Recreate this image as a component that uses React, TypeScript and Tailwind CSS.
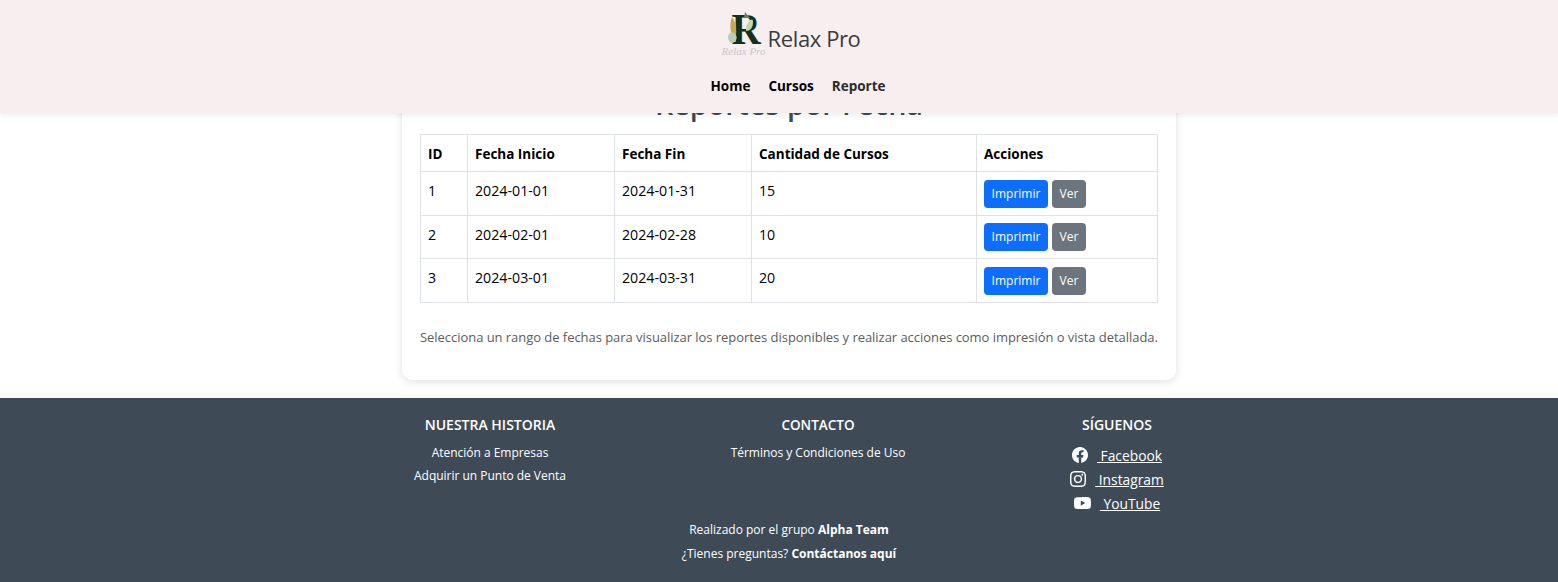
import { BsFacebook, BsInstagram, BsYoutube } from "react-icons/bs";

const rows = [
  ["1", "2024-01-01", "2024-01-31", "15"],
  ["2", "2024-02-01", "2024-02-28", "10"],
  ["3", "2024-03-01", "2024-03-31", "20"],
];

function Logo() {
  return (
    <div className="relative w-[45px] h-[58px] shrink-0">
      <span className="absolute left-[6px] top-[-1px] origin-right scale-x-[0.92] font-['Liberation_Serif',serif] font-bold text-[44px] leading-[44px] text-[#15301a]">R</span>
      <svg viewBox="0 0 45 58" className="absolute inset-0 w-full h-full">
        <path d="M9 8 C6 15 7 25 12 31 C14 24 14 14 9 8Z" fill="#c9a752" />
        <path d="M6 32 C3 26 8 21 12 25 C16 29 12 34 8 34Z" fill="#b7cfb5" />
        <path d="M23 19 C25 11 30 8 30 13 C30 19 27 22 23 22Z" fill="#c3d6ae" />
        <path d="M22 3 L27 9 L21 9Z" fill="#5f8a5f" />
      </svg>
      <span className="absolute left-[-1px] top-[36px] font-['Liberation_Serif',serif] italic text-[11px] leading-[12px] text-[#c8c8c6] whitespace-nowrap">Relax Pro</span>
    </div>
  );
}

export default function App() {
  return (
    <div className="relative h-[582px] overflow-hidden flex flex-col bg-white font-['Open_Sans',sans-serif] text-[14px] text-black">
      <header className="absolute top-0 inset-x-0 z-10 h-[113px] bg-[#f6eeef] shadow-[0_2px_6px_rgba(0,0,0,0.08)] flex flex-col items-center">
        <div className="flex items-center h-[76px] pl-[25px]">
          <Logo />
          <span className="text-[22px] text-[#3b3b3b] tracking-[-0.4px]">Relax Pro</span>
        </div>
        <nav className="flex gap-[18px] h-[20px] items-center pl-[38px] font-bold text-[13.5px]">
          <span>Home</span>
          <span>Cursos</span>
          <span className="text-[#2b2b2b]">Reporte</span>
        </nav>
      </header>

      <main className="flex-1 flex flex-col justify-end pb-[18px] min-h-0">
        <section className="ml-[402px] w-[774px] rounded-[10px] bg-white shadow-[0_2px_8px_rgba(0,0,0,0.12)] px-[18px] pb-[32px]">
          <h1 className="text-center text-[28.7px] leading-[36px] font-semibold text-[#3e4a56] mb-[12px]">Reportes por Fecha</h1>
          <table className="w-[738px] table-fixed border-collapse text-[13.5px]">
            <colgroup>
              <col className="w-[47px]" />
              <col className="w-[147px]" />
              <col className="w-[137px]" />
              <col className="w-[225px]" />
              <col className="w-[181px]" />
            </colgroup>
            <thead>
              <tr className="h-[37px] font-bold">
                {["ID", "Fecha Inicio", "Fecha Fin", "Cantidad de Cursos", "Acciones"].map((h) => (
                  <th key={h} className="border border-[#dee2e6] px-[7px] pt-[1px] text-left">{h}</th>
                ))}
              </tr>
            </thead>
            <tbody>
              {rows.map((r) => (
                <tr key={r[0]} className="h-[43.6px]">
                  {r.map((c) => (
                    <td key={c} className="border border-[#dee2e6] px-[7px] pt-[8px] align-top leading-[21px] text-[14.2px]">{c}</td>
                  ))}
                  <td className="border border-[#dee2e6] px-[7px]">
                    <div className="flex gap-[4px]">
                      <button className="h-[28px] w-[64px] rounded-[4px] bg-[#0d6efd] text-white text-[12px]">Imprimir</button>
                      <button className="h-[28px] w-[34px] rounded-[4px] bg-[#6c757d] text-white text-[12px]">Ver</button>
                    </div>
                  </td>
                </tr>
              ))}
            </tbody>
          </table>
          <p className="mt-[24px] text-[13px] tracking-[-0.045px] leading-[21px] text-[#5c5c5c] whitespace-nowrap">
            Selecciona un rango de fechas para visualizar los reportes disponibles y realizar acciones como impresión o vista detallada.
          </p>
        </section>
      </main>

      <footer className="h-[184px] shrink-0 bg-[#3e4a56] text-white pt-[17px]">
        <div className="ml-[402px] w-[774px] flex">
          <div className="w-[176px] shrink-0 flex flex-col items-center">
            <h3 className="text-[14px] font-semibold leading-[20px] whitespace-nowrap">NUESTRA HISTORIA</h3>
            <p className="mt-[6px] text-[12px] tracking-[-0.02px] leading-[23px] whitespace-nowrap">Atención a Empresas</p>
            <p className="text-[12px] tracking-[-0.02px] leading-[23px] whitespace-nowrap">Adquirir un Punto de Venta</p>
          </div>
          <div className="w-[480px] shrink-0 flex flex-col items-center">
            <h3 className="text-[13.5px] font-semibold leading-[20px]">CONTACTO</h3>
            <p className="mt-[6px] text-[12px] tracking-[-0.02px] leading-[23px] whitespace-nowrap">Términos y Condiciones de Uso</p>
          </div>
          <div className="w-[118px] shrink-0 flex flex-col items-center">
            <h3 className="text-[14px] font-semibold leading-[20px]">SÍGUENOS</h3>
            <a className="mt-[9px] flex items-center h-[24px] text-[13.8px]"><BsFacebook className="text-[16px] mr-[9px] -mt-[2px]" /><span className="underline whitespace-pre"> Facebook</span></a>
            <a className="flex items-center h-[24px] text-[13.8px]"><BsInstagram className="text-[16px] mr-[9px] -mt-[2px]" /><span className="underline whitespace-pre"> Instagram</span></a>
            <a className="flex items-center h-[24px] text-[13.8px]"><BsYoutube className="text-[17px] mr-[9px] -mt-[2px]" /><span className="underline whitespace-pre"> YouTube</span></a>
          </div>
        </div>
        <div className="ml-[402px] w-[774px] mt-[2px] flex flex-col items-center text-[12px]">
          <p className="leading-[24px]">Realizado por el grupo <b>Alpha Team</b></p>
          <p className="leading-[24px]">¿Tienes preguntas? <b>Contáctanos aquí</b></p>
        </div>
      </footer>
    </div>
  );
}
